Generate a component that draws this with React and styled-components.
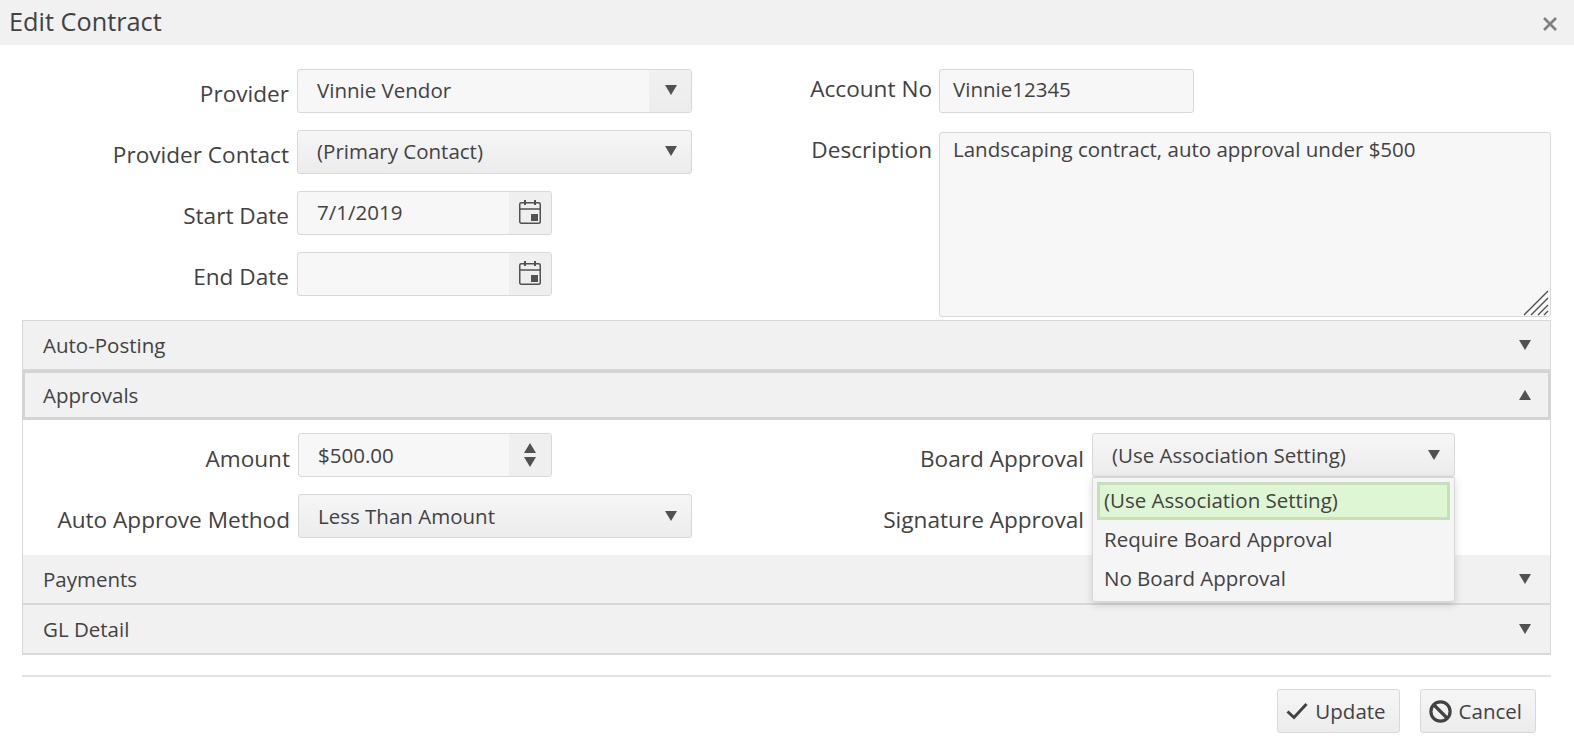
import React from 'react';
import styled, { createGlobalStyle } from 'styled-components';

const GlobalStyle = createGlobalStyle`
  html, body {
    margin: 0;
    padding: 0;
    background: #fff;
    color: #424242;
    font-family: "Open Sans", "Liberation Sans", sans-serif;
    font-size: 20.5px;
    overflow: hidden;
  }
  * {
    box-sizing: border-box;
  }
`;

const Triangle = ({ up }) => (
  <svg width="12" height="10" viewBox="0 0 12 10" aria-hidden="true">
    <path d={up ? 'M6 0L12 10H0Z' : 'M0 0H12L6 10Z'} fill="#515151" />
  </svg>
);

const CalendarIcon = () => (
  <svg width="24" height="24" viewBox="0 0 24 24" aria-hidden="true">
    <rect
      x="1.75"
      y="2.75"
      width="20.5"
      height="20.5"
      rx="1.5"
      fill="none"
      stroke="#515151"
      strokeWidth="1.5"
    />
    <path d="M2 9h20" stroke="#515151" strokeWidth="1.5" />
    <path d="M6 0h2v5H6zM16 0h2v5h-2zM13 14h7v7h-7z" fill="#515151" />
  </svg>
);

const CloseIcon = () => (
  <svg width="16" height="16" viewBox="0 0 16 16" aria-hidden="true">
    <path d="M2 2L14 14M14 2L2 14" stroke="#808080" strokeWidth="2.6" />
  </svg>
);

const Grip = () => (
  <svg width="26" height="26" viewBox="0 0 26 26" aria-hidden="true">
    <path
      d="M1 25L25 1M8 25L25 8M15 25L25 15M21 25L25 21"
      stroke="#4d4d4d"
      strokeWidth="1.3"
      fill="none"
    />
  </svg>
);

const CheckIcon = () => (
  <svg width="22" height="18" viewBox="0 0 22 18" aria-hidden="true">
    <path d="M1.5 9.5L8 15.5L20.5 2" fill="none" stroke="#424242" strokeWidth="3" />
  </svg>
);

const BanIcon = () => (
  <svg width="23" height="23" viewBox="0 0 23 23" aria-hidden="true">
    <circle cx="11.5" cy="11.5" r="9.6" fill="none" stroke="#424242" strokeWidth="3.2" />
    <path d="M5 5L18 18" stroke="#424242" strokeWidth="3.2" />
  </svg>
);

const Select = ({ value, flat, width }) => (
  <SelectBox $width={width} $flat={flat}>
    <SelectText>{value}</SelectText>
    <SelectArrow $flat={flat}>
      <Triangle />
    </SelectArrow>
  </SelectBox>
);

const DateField = ({ value }) => (
  <InputGroup $width={255}>
    <GroupInput defaultValue={value} readOnly />
    <Addon>
      <CalendarIcon />
    </Addon>
  </InputGroup>
);

const AccordionItem = ({ title, open }) => (
  <PanelHeader $open={open}>
    <span>{title}</span>
    <Triangle up={open} />
  </PanelHeader>
);

const App = () => {
  return (
    <>
      <GlobalStyle />
      <Dialog>
        <TitleBar>
          <Title>Edit Contract</Title>
          <CloseButton>
            <CloseIcon />
          </CloseButton>
        </TitleBar>
        <FormArea>
          <LeftColumn>
            <Row>
              <Label $width={267}>Provider</Label>
              <Select value="Vinnie Vendor" width={395} />
            </Row>
            <Row>
              <Label $width={267}>Provider Contact</Label>
              <Select value="(Primary Contact)" width={395} flat />
            </Row>
            <Row>
              <Label $width={267}>Start Date</Label>
              <DateField value="7/1/2019" />
            </Row>
            <Row>
              <Label $width={267}>End Date</Label>
              <DateField value="" />
            </Row>
          </LeftColumn>
          <RightColumn>
            <AccountRow>
              <Label $width={139} $lineHeight={40}>Account No</Label>
              <PlainInput defaultValue="Vinnie12345" readOnly />
            </AccountRow>
            <DescriptionRow>
              <Label $width={139} $lineHeight={36}>Description</Label>
              <TextAreaWrap>
                <TextArea
                  defaultValue="Landscaping contract, auto approval under $500"
                  readOnly
                />
                <GripHolder>
                  <Grip />
                </GripHolder>
              </TextAreaWrap>
            </DescriptionRow>
          </RightColumn>
        </FormArea>
        <Accordion>
          <AccordionItem title="Auto-Posting" />
          <AccordionItem title="Approvals" open />
          <PanelBody>
            <BodyColumn>
              <Row>
                <Label $width={267}>Amount</Label>
                <InputGroup $width={254}>
                  <GroupInput defaultValue="$500.00" readOnly />
                  <Addon>
                    <Spinner>
                      <Triangle up />
                      <Triangle />
                    </Spinner>
                  </Addon>
                </InputGroup>
              </Row>
              <Row>
                <Label $width={267}>Auto Approve Method</Label>
                <Select value="Less Than Amount" width={394} flat />
              </Row>
            </BodyColumn>
            <BodyRightColumn>
              <Row>
                <Label $width={220}>Board Approval</Label>
                <DropdownAnchor>
                  <Select value="(Use Association Setting)" width={363} flat />
                  <Popup>
                    <Option $selected>(Use Association Setting)</Option>
                    <Option>Require Board Approval</Option>
                    <Option>No Board Approval</Option>
                  </Popup>
                </DropdownAnchor>
              </Row>
              <Row>
                <Label $width={220}>Signature Approval</Label>
                <Select value="" width={363} flat />
              </Row>
            </BodyRightColumn>
          </PanelBody>
          <AccordionItem title="Payments" />
          <AccordionItem title="GL Detail" />
        </Accordion>
        <Footer>
          <FooterButton>
            <CheckIcon />
            Update
          </FooterButton>
          <FooterButton>
            <BanIcon />
            Cancel
          </FooterButton>
        </Footer>
      </Dialog>
    </>
  );
};

export default App;

const Dialog = styled.div`
  width: 1574px;
  height: 746px;
  background: #fff;
`;

const TitleBar = styled.div`
  height: 45px;
  background: #f1f1f1;
  display: flex;
  align-items: center;
  justify-content: space-between;
  padding: 0 16px 0 9px;
`;

const Title = styled.div`
  font-size: 25.3px;
  color: #424242;
  padding-bottom: 3px;
`;

const CloseButton = styled.div`
  display: flex;
  align-items: center;
  padding-top: 3px;
`;

const FormArea = styled.div`
  display: flex;
  height: 275px;
  padding: 24px 23px 0 22px;
`;

const LeftColumn = styled.div`
  width: 771px;
  display: flex;
  flex-direction: column;
`;

const RightColumn = styled.div`
  flex: 1;
  display: flex;
  flex-direction: column;
  gap: 19px;
`;

const Row = styled.div`
  display: flex;
  height: 44px;
  margin-bottom: 17px;
  gap: 8px;
`;

const AccountRow = styled.div`
  display: flex;
  height: 44px;
  gap: 7px;
`;

const DescriptionRow = styled.div`
  display: flex;
  height: 185px;
  gap: 7px;
`;

const Label = styled.label`
  flex: none;
  width: ${props => props.$width}px;
  font-size: 22.6px;
  text-align: right;
  line-height: ${props => props.$lineHeight || 44}px;
  padding-top: ${props => (props.$lineHeight ? 0 : 3)}px;
  white-space: nowrap;
`;

const SelectBox = styled.div`
  width: ${props => props.$width}px;
  height: 44px;
  display: flex;
  align-items: center;
  border: 1px solid #d8d8d8;
  border-radius: 3px;
  background: ${props =>
    props.$flat
      ? 'linear-gradient(#f6f6f6, #ececec)'
      : '#f7f7f7'};
`;

const SelectText = styled.div`
  flex: 1;
  padding-left: 19px;
  padding-bottom: 3px;
`;

const SelectArrow = styled.div`
  width: 42px;
  height: 100%;
  display: flex;
  align-items: center;
  justify-content: center;
  padding: 0 0 3px 1px;
  background: ${props =>
    props.$flat ? 'transparent' : 'linear-gradient(#f1f1f1, #ececec)'};
`;

const InputGroup = styled.div`
  width: ${props => props.$width}px;
  height: 44px;
  display: flex;
  border: 1px solid #d8d8d8;
  border-radius: 3px;
  background: #f7f7f7;
  overflow: hidden;
`;

const GroupInput = styled.input`
  flex: 1;
  min-width: 0;
  border: none;
  outline: none;
  background: transparent;
  padding: 0 0 3px 19px;
  font: inherit;
  color: inherit;
`;

const Addon = styled.div`
  width: 42px;
  display: flex;
  align-items: center;
  justify-content: center;
  padding-bottom: 2px;
  background: #efefef;
`;

const Spinner = styled.div`
  display: flex;
  flex-direction: column;
  gap: 4px;
  padding-top: 2px;
`;

const PlainInput = styled.input`
  width: 255px;
  height: 44px;
  border: 1px solid #d8d8d8;
  border-radius: 3px;
  background: #f7f7f7;
  padding: 0 0 5px 13px;
  outline: none;
  font: inherit;
  color: inherit;
`;

const TextAreaWrap = styled.div`
  position: relative;
  flex: 1;
`;

const TextArea = styled.textarea`
  display: block;
  width: 100%;
  height: 100%;
  border: 1px solid #d8d8d8;
  border-radius: 3px;
  background: #f7f7f7;
  padding: 2px 13px;
  resize: none;
  outline: none;
  font: inherit;
  color: inherit;
`;

const GripHolder = styled.div`
  position: absolute;
  right: 2px;
  bottom: 1px;
  width: 26px;
  height: 26px;
`;

const Accordion = styled.div`
  margin: 0 23px 0 22px;
  border: 1px solid #d8d8d8;
  border-bottom: none;
`;

const PanelHeader = styled.div`
  height: 50px;
  display: flex;
  align-items: center;
  justify-content: space-between;
  padding: 0 19px 0 20px;
  background: #f1f1f1;
  border-bottom: 2px solid #d8d8d8;
  ${props =>
    props.$open &&
    `
    border: 3px solid #d4d4d4;
    margin: -1px -1px 0 -1px;
    padding: 0 17px 0 18px;
  `}
`;

const PanelBody = styled.div`
  display: flex;
  padding-top: 13px;
  height: 135px;

  ${Label} {
    padding-top: 4px;
  }
  ${SelectText}, ${GroupInput} {
    padding-bottom: 1px;
  }
  ${SelectArrow} {
    padding-bottom: 1px;
  }
`;

const BodyColumn = styled.div`
  width: 797px;
`;

const BodyRightColumn = styled.div`
  flex: 1;
  padding-left: 44px;
`;

const DropdownAnchor = styled.div`
  position: relative;
`;

const Popup = styled.div`
  position: absolute;
  z-index: 5;
  top: 44px;
  left: 0;
  width: 363px;
  height: 125px;
  padding: 4px;
  background: #f5f5f5;
  border: 1px solid #d8d8d8;
  border-radius: 0 0 3px 3px;
  box-shadow: 0 3px 8px rgba(0, 0, 0, 0.15);
`;

const Option = styled.div`
  height: ${props => (props.$selected ? 38 : 39)}px;
  line-height: ${props => (props.$selected ? 30 : 39)}px;
  padding-left: ${props => (props.$selected ? 4 : 7)}px;
  ${props =>
    props.$selected &&
    `
    background: #dff6d5;
    border: 3px solid #c5dfb9;
  `}
`;

const Footer = styled.div`
  margin: 20px 23px 0 22px;
  padding: 12px 15px 0 0;
  border-top: 2px solid #e2e2e2;
  display: flex;
  justify-content: flex-end;
  gap: 20px;
`;

const FooterButton = styled.div`
  height: 44px;
  display: flex;
  align-items: center;
  gap: 7px;
  padding: 0 13px 0 8px;
  border: 1px solid #d8d8d8;
  border-radius: 3px;
  background: linear-gradient(#f6f6f6, #ececec);
`;
